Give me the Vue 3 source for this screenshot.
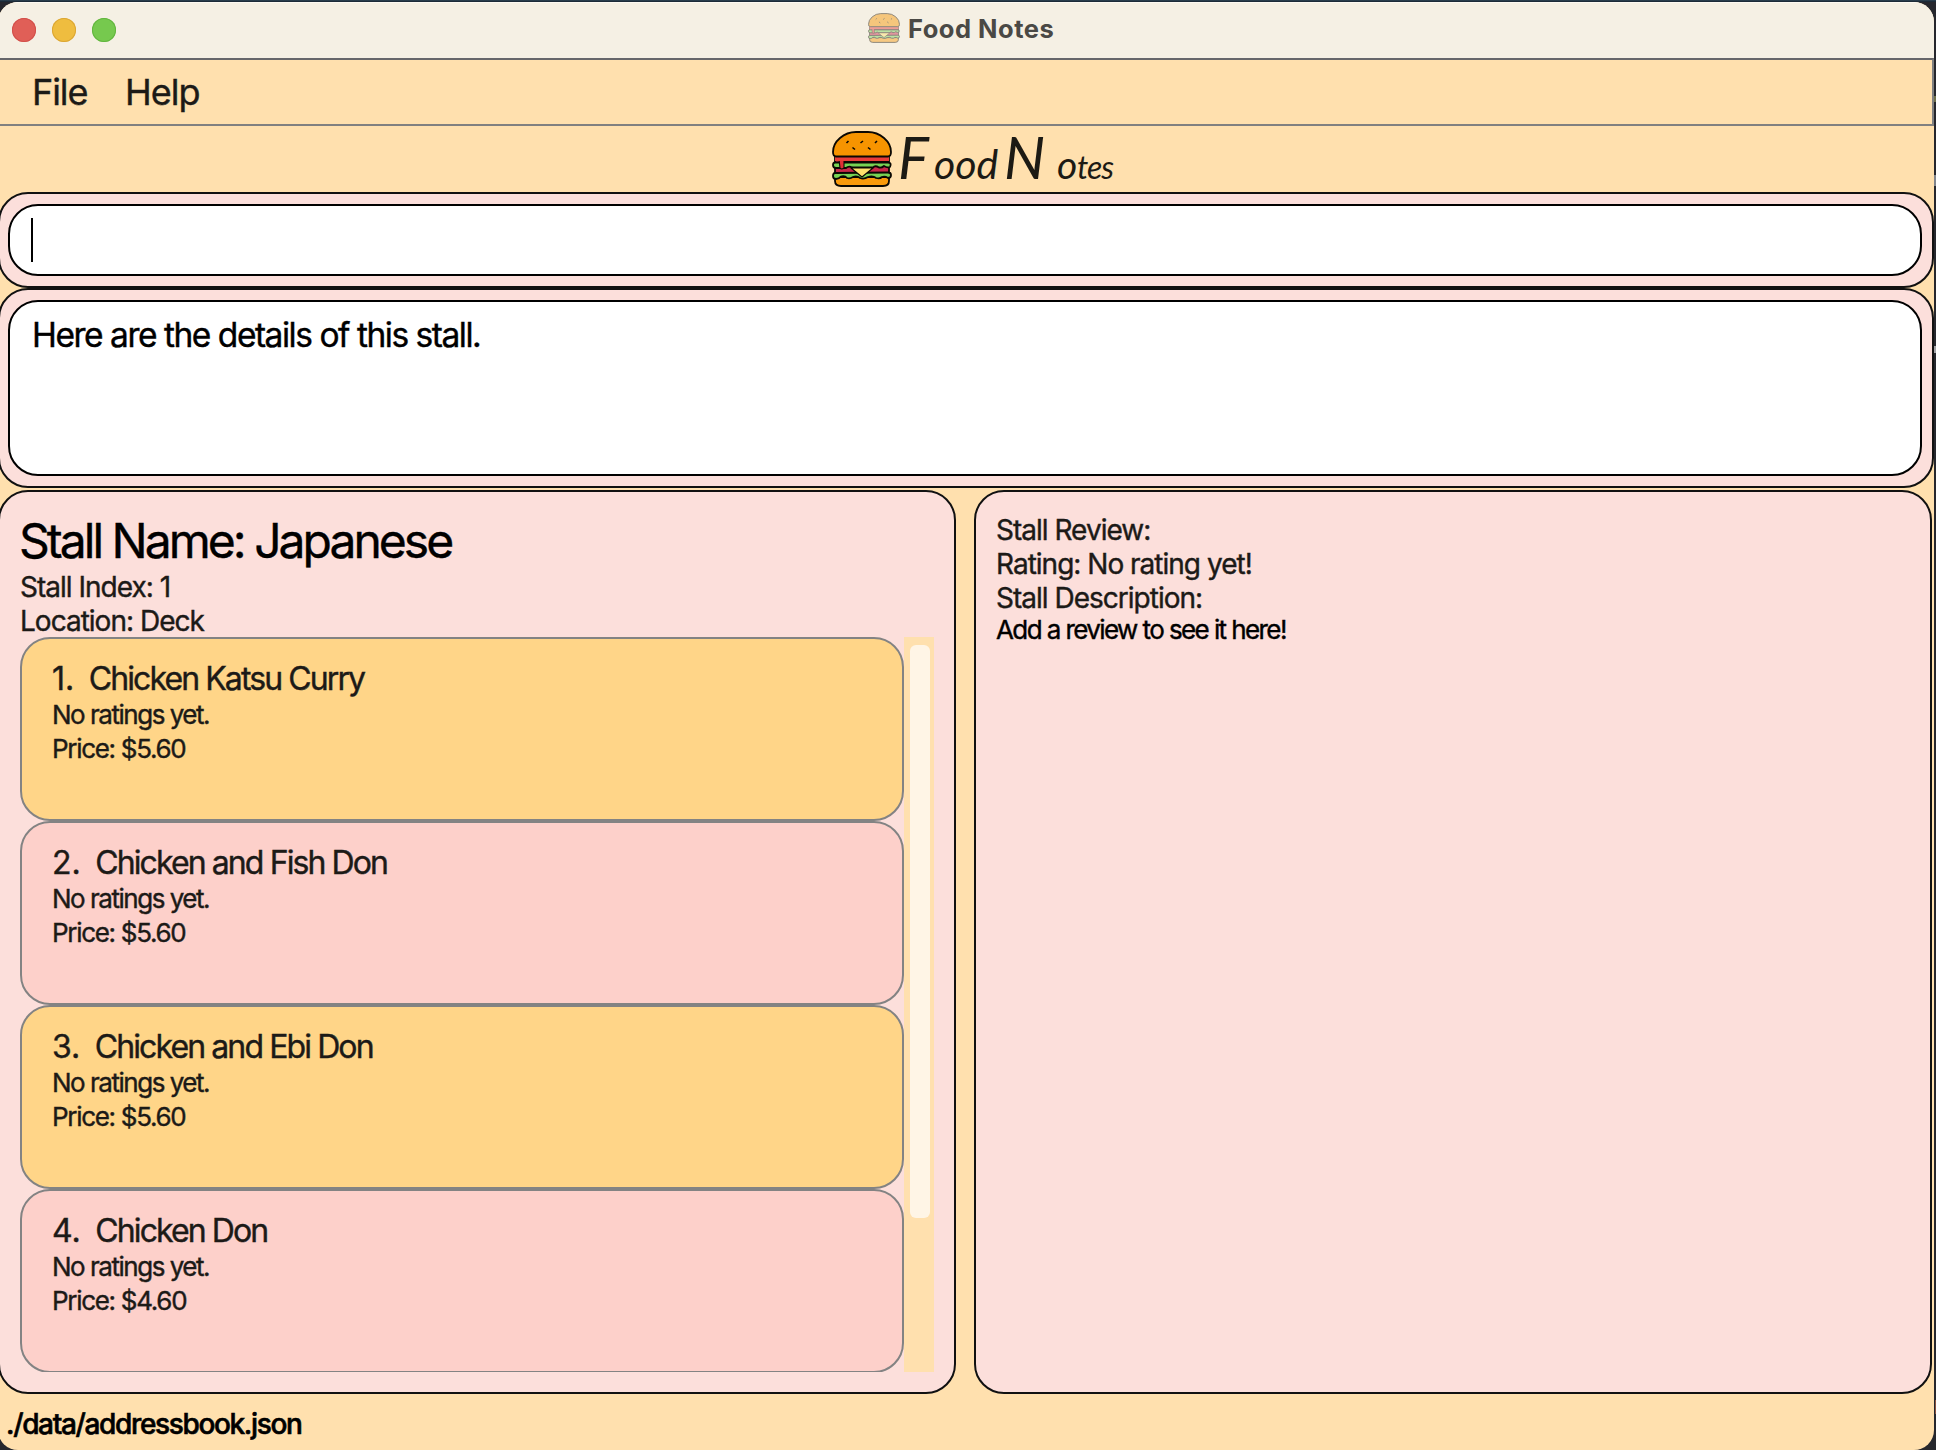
<script setup>
import { h } from 'vue'

const menus = [
  { label: 'File', cls: 'menu-file' },
  { label: 'Help', cls: 'menu-help' },
]

const items = [
  { id: 1, name: 'Chicken Katsu Curry', price: '$5.60' },
  { id: 2, name: 'Chicken and Fish Don', price: '$5.60' },
  { id: 3, name: 'Chicken and Ebi Don', price: '$5.60' },
  { id: 4, name: 'Chicken Don', price: '$4.60' },
]

// Burger artwork shared by the title bar and the header
const p = (d, fill, extra = {}) => h('path', { d, fill, ...extra })
const line = { stroke: '#0b0803', 'stroke-width': 1.8, 'stroke-linejoin': 'round' }
const Burger = () =>
  h('svg', { viewBox: '0 0 60 56' }, [
    p('M3 46H57V50Q57 55 51 55H9Q3 55 3 50Z', '#f99a0c', line),
    p('M3 26H57V44H3Z', '#c9284a', line),
    p('M4 37H56V41H4Z', '#c9284a'),
    p('M3 42Q1 42 1 45Q1 48 4 48Q7 48 9 45.500Q13 44.500 15 47Q18 48 21 46Q25 44.500 28 47Q32 48.500 36 46Q41 44.500 44 47Q48 48 50 46Q53 45 56 47Q59 47 59 44Q59 41.500 56 41.500Z', '#77d354', line),
    p('M3 31.500Q1 31.500 1 34Q1 37 4 37H14Q17 34.500 20 36.500H41Q43 34 47 36.500Q50 37 52 35Q55 37 58 36Q60 31.500 56 31.500Z', '#77d354', line),
    p('M19 37H41L30 46Z', '#ffe16c', { stroke: '#0b0803', 'stroke-width': 1.2, 'stroke-linejoin': 'round' }),
    p('M7 28H12V37Q9.500 39 8 37Z', '#e02f36', { stroke: '#0b0803', 'stroke-width': 1.1 }),
    p('M3 26H57V30H3Z', '#e93c3a'),
    p('M12 30.700H57', 'none', { stroke: '#0b0803', 'stroke-width': 1.2 }),
    p('M1 21Q1 13 8 7Q15 1 24 1H36Q45 1 52 7Q59 13 59 21Q59 25.500 56 25.500H4Q1 25.500 1 21Z', '#f79400', line),
    p('M14.500 12L16.500 10M28.500 12L31 10M43 12L45 10M20.500 16.500L23 18.500M36 16.500L38.500 18.500', 'none', { stroke: '#0b0803', 'stroke-width': 1.6 }),
  ])
</script>

<template>
  <div class="desktop">
    <div class="window">
      <header class="titlebar">
        <div class="lights">
          <i class="light red"></i>
          <i class="light yellow"></i>
          <i class="light green"></i>
        </div>
        <Burger class="title-icon" />
        <span class="title">Food Notes</span>
      </header>

      <nav class="menubar">
        <span v-for="m in menus" :key="m.label" :class="m.cls">{{ m.label }}</span>
      </nav>

      <div class="brand">
        <Burger class="brand-icon" />
        <div class="wordmark"><span class="cap-f">F</span><span class="ood">ood</span><span class="gap">&nbsp;</span><span class="cap-n">N</span><span class="o">o</span><span class="tes">tes</span></div>
      </div>

      <section class="box command">
        <div class="field"><i class="caret"></i></div>
      </section>

      <section class="box result">
        <div class="field">Here are the details of this stall.</div>
      </section>

      <main class="panes">
        <section class="pane stall">
          <h1>Stall Name: Japanese</h1>
          <p class="info">Stall Index: 1</p>
          <p class="info">Location: Deck</p>
          <div class="list">
            <div class="cards">
              <article v-for="it in items" :key="it.id" class="card">
                <h2><span class="num">{{ it.id }}.</span><span>{{ it.name }}</span></h2>
                <p class="rating">No ratings yet.</p>
                <p class="price">Price: {{ it.price }}</p>
              </article>
            </div>
            <div class="track"><div class="thumb"></div></div>
          </div>
        </section>

        <section class="pane review">
          <p class="info">Stall Review:</p>
          <p class="info">Rating: No rating yet!</p>
          <p class="info">Stall Description:</p>
          <p class="hint">Add a review to see it here!</p>
        </section>
      </main>

      <footer class="status">./data/addressbook.json</footer>
    </div>
  </div>
</template>

<style>
body {
  margin: 0;
  overflow: hidden;
}
</style>

<style scoped>
* {
  box-sizing: border-box;
}
.desktop {
  width: 1936px;
  height: 1450px;
  padding: 2px 2px 0 0;
  overflow: hidden;
  background:
    linear-gradient(#2f4556, #16222e) 0 0 / 1936px 2px no-repeat,
    linear-gradient(#6d6f4c, #6d6f4c) 1934px 96px / 2px 6px no-repeat,
    linear-gradient(#81858c, #81858c) 1934px 175px / 2px 11px no-repeat,
    linear-gradient(#a0a0a4, #a0a0a4) 1934px 346px / 2px 7px no-repeat,
    linear-gradient(#8a5240, #8a5240) 1935px 1400px / 1px 14px no-repeat,
    #26272d;
  font-family: Inter, "Liberation Sans", sans-serif;
  color: #1c1a17;
  white-space: nowrap;
  -webkit-text-stroke: 0.400px currentColor;
}
.window {
  display: flex;
  flex-direction: column;
  width: 1936px;
  height: 1448px;
  margin-left: -2px;
  border-radius: 20px;
  overflow: hidden;
  background: #ffe0ae;
}
h1,
h2,
p {
  margin: 0;
  font-weight: 400;
}

.titlebar {
  display: flex;
  align-items: center;
  height: 56px;
  flex: none;
  padding-left: 14px;
  background: #f5f0e4;
  box-shadow: inset 0 1px #fdfaf2;
}
.lights {
  display: flex;
  gap: 16px;
  width: 856px;
}
.light {
  width: 24px;
  height: 24px;
  border-radius: 50%;
}
.red {
  background: #e05f57;
  box-shadow: inset 0 0 0 1px #d2504b;
}
.yellow {
  background: #efbd3f;
  box-shadow: inset 0 0 0 1px #dba634;
}
.green {
  background: #76c94e;
  box-shadow: inset 0 0 0 1px #62b53f;
}
.title-icon {
  width: 32px;
  height: 30px;
  margin: -4px 8px 0 0;
  opacity: 0.45;
}
.title {
  margin-top: -3px;
  font-size: 25.500px;
  font-weight: 700;
  letter-spacing: 0.500px;
  color: #4a4945;
  -webkit-text-stroke: 0;
}

.menubar {
  display: flex;
  height: 68px;
  flex: none;
  padding-left: 34px;
  border: 2px solid #808080;
  border-top-color: #66666a;
  border-left: 0;
  font-size: 36px;
  line-height: 64px;
}
.menu-file {
  width: 93px;
  letter-spacing: -1.100px;
}
.menu-help {
  letter-spacing: -1px;
}

.brand {
  display: flex;
  height: 66px;
  flex: none;
  padding-left: 834px;
}
.brand-icon {
  width: 60px;
  height: 56px;
  margin: 5px 6px 0 0;
}
.wordmark {
  display: flex;
  align-items: baseline;
  height: 62px;
  font-family: Lato, "Open Sans", sans-serif;
  font-style: italic;
  line-height: 62px;
  color: #1c1a14;
  -webkit-text-stroke: 0;
}
.cap-f {
  width: 36px;
  font-size: 58px;
}
.ood {
  width: 66px;
  font-size: 41px;
}
.gap {
  width: 4px;
}
.cap-n {
  width: 53px;
  font-size: 58px;
}
.o {
  width: 20px;
  font-size: 39px;
}
.tes {
  font-size: 32px;
  letter-spacing: -1px;
}

.box {
  flex: none;
  padding: 10px;
  border: 2px solid #111;
  border-radius: 30px;
  background: #fcdfdb;
}
.command {
  height: 96px;
}
.result {
  height: 200px;
}
.field {
  width: 1914px;
  height: 100%;
  margin-left: -2px;
  border: 2px solid #000;
  border-radius: 30px;
  background: #fff;
}
.result {
  margin-bottom: 2px;
}
.command .field {
  padding: 12px 0 0 21px;
}
.caret {
  display: block;
  width: 2px;
  height: 44px;
  background: #000;
}
.result .field {
  padding: 13px 0 0 22px;
  font-size: 33.500px;
  line-height: 40px;
  letter-spacing: -1.470px;
  color: #000;
}

.panes {
  display: flex;
  gap: 18px;
  height: 904px;
  flex: none;
}
.pane {
  height: 904px;
  padding: 20px;
  border: 2px solid #111;
  border-radius: 30px;
  background: #fcdfdb;
}
.stall {
  width: 958px;
}
.review {
  width: 958px;
  padding-top: 22px;
}
h1 {
  height: 59px;
  margin-left: -1px;
  font-size: 48px;
  line-height: 58px;
  letter-spacing: -2.980px;
  color: #000;
}
.info {
  height: 33.800px;
  font-size: 28px;
  line-height: 33.800px;
  letter-spacing: -0.990px;
}
.hint {
  font-size: 26px;
  line-height: 30px;
  letter-spacing: -1.590px;
  color: #000;
}
.list {
  display: flex;
  width: 914px;
  height: 735px;
  margin-top: -1.600px;
  overflow: hidden;
}
.cards {
  width: 884px;
}
.card {
  height: 184px;
  padding: 21px 0 0 30px;
  border: 2px solid #838383;
  border-radius: 30px;
  background: #ffd588;
  line-height: 34px;
}
.card:nth-child(even) {
  background: #fdd0ca;
}
h2 {
  display: flex;
  height: 38px;
  gap: 14.500px;
  font-size: 32px;
  line-height: 38px;
  letter-spacing: -1.900px;
}
.num {
  letter-spacing: 0;
}
.rating {
  font-size: 26px;
  letter-spacing: -1.480px;
}
.price {
  font-size: 26px;
  letter-spacing: -1.300px;
}
.track {
  width: 30px;
  padding: 8px 4px 8px 6px;
  background: #ffe0ae;
}
.thumb {
  height: 573px;
  border-radius: 6px;
  background: #fff5e6;
}

.status {
  padding-left: 8px;
  font-size: 28px;
  font-weight: 500;
  line-height: 60px;
  letter-spacing: -1.350px;
  color: #000;
  -webkit-text-stroke: 0.600px #000;
}
</style>
